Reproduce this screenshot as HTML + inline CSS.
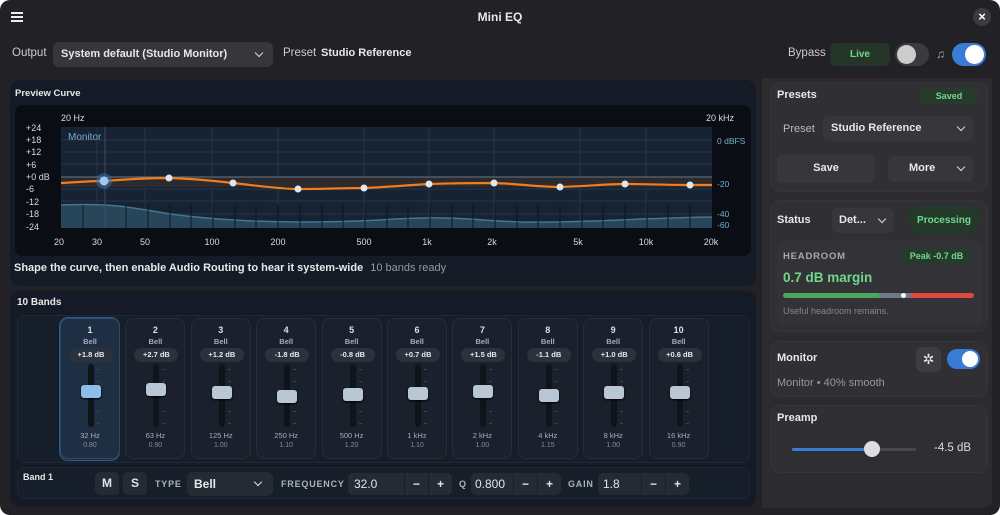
<!DOCTYPE html>
<html><head><meta charset="utf-8"><style>
*{box-sizing:border-box;margin:0;padding:0}
body{width:1000px;height:515px;background:#fff;font-family:"Liberation Sans",sans-serif;overflow:hidden;position:relative}
.win{position:absolute;left:0;top:0;width:1000px;height:515px;background:#222226;border-radius:10px;overflow:hidden}
.a{position:absolute}
.t{color:#e8e8ea;font-size:11px}
.b{font-weight:bold}
.dd{background:#36363b;border-radius:6px}
.chev{position:absolute;width:6px;height:6px;border-right:1.8px solid #ddd;border-bottom:1.8px solid #ddd;transform:rotate(45deg)}
.card{background:#2f2f34;border-radius:10px;border:1px solid #343439}
.strip{position:absolute;top:318px;width:60px;height:141px;background:#1a212c;border:1px solid #252d38;border-radius:8px;text-align:center;color:#c8ccd2}
.strip .n{position:absolute;top:6px;width:100%;font-size:9px;font-weight:bold;color:#dde}
.strip .bl{position:absolute;top:18px;width:100%;font-size:7.5px;font-weight:bold;color:#aab}
.strip .pill{position:absolute;top:29px;left:8px;width:44px;height:14px;border-radius:7px;background:#2a323d;font-size:7.5px;font-weight:bold;line-height:14px;color:#e6e8ec}
.strip .tr{position:absolute;top:45px;left:27px;width:6px;height:63px;border-radius:3px;background:#0f141b}
.strip .tick{position:absolute;left:36px;width:3px;height:1px;background:#3a4350}
.strip .mid{position:absolute;left:20px;width:20px;height:1px;background:#4a5360}
.strip .h{position:absolute;left:20px;width:20px;height:13px;border-radius:3px;background:#b9c6d4;box-shadow:0 1px 2px #000}
.strip .hz{position:absolute;top:112px;width:100%;font-size:7.5px;color:#aab}
.strip .q{position:absolute;top:123px;width:100%;font-size:7px;color:#889}
.btn{position:absolute;background:#252b35;border-radius:5px;color:#dfe3e8;font-weight:bold;text-align:center}
.lbl{position:absolute;font-size:9px;font-weight:bold;color:#aab2bc;letter-spacing:.8px}
.spin{position:absolute;height:22px;background:#252b35;border-radius:5px;color:#e0e4ea;font-size:12px;line-height:22px}
.spin span{position:absolute;top:0;height:22px;width:24px;border-left:1px solid #1a1f27;text-align:center;font-weight:bold}
</style></head><body><div class="win">
<!-- header -->
<div class="a" style="left:11px;top:12px;width:12px;height:2px;background:#eee;box-shadow:0 4px 0 #eee,0 8px 0 #eee"></div>
<div class="a t b" style="left:0;width:1000px;top:10px;text-align:center;font-size:12px">Mini EQ</div>
<div class="a" style="left:973px;top:8px;width:18px;height:18px;border-radius:9px;background:#3a3a3f;color:#fff;font-size:13px;text-align:center;line-height:18px;font-weight:bold">×</div>
<div class="a t" style="left:12px;top:47px;font-size:11.5px;color:#ccc">Output</div>
<div class="a dd" style="left:53px;top:42px;width:220px;height:25px"><div class="a t b" style="left:8px;top:6px;font-size:11px">System default (Studio Monitor)</div><div class="chev" style="left:203px;top:8px"></div></div>
<div class="a t" style="left:283px;top:47px;font-size:11.5px;color:#ccc">Preset</div>
<div class="a t b" style="left:321px;top:47px;font-size:11px">Studio Reference</div>
<div class="a t" style="left:788px;top:47px;font-size:11.5px;color:#ccc">Bypass</div>
<div class="a" style="left:830px;top:43px;width:60px;height:23px;border-radius:6px;background:#253528;color:#6fd98a;font-size:10px;font-weight:bold;text-align:center;line-height:23px">Live</div>
<div class="a" style="left:895px;top:43px;width:34px;height:23px;border-radius:12px;background:#3a3a3f"><div class="a" style="left:2px;top:2px;width:19px;height:19px;border-radius:10px;background:#ccc"></div></div>
<div class="a" style="left:936px;top:47px;font-size:12px;color:#aaa">♫</div>
<div class="a" style="left:952px;top:43px;width:34px;height:23px;border-radius:12px;background:#3a7bd5"><div class="a" style="left:13px;top:2px;width:19px;height:19px;border-radius:10px;background:#fff"></div></div>

<!-- preview panel -->
<div class="a" style="left:10px;top:80px;width:746px;height:206px;background:#141b26;border-radius:10px"></div>
<div class="a t b" style="left:15px;top:88px;font-size:9.5px">Preview Curve</div>
<div class="a" style="left:15px;top:105px;width:736px;height:151px;background:#0a0e14;border-radius:8px"></div>
<svg class="a" style="left:0;top:0" width="760" height="290">
<rect x="61" y="127" width="651" height="101" fill="#172232"/>
<g stroke="#24354a" stroke-width="1">
<line x1="61" x2="712" y1="140" y2="140"/><line x1="61" x2="712" y1="152" y2="152"/><line x1="61" x2="712" y1="164" y2="164"/><line x1="61" x2="712" y1="189" y2="189"/><line x1="61" x2="712" y1="201" y2="201"/><line x1="61" x2="712" y1="214" y2="214"/>
<line x1="97" x2="97" y1="127" y2="228"/><line x1="145" x2="145" y1="127" y2="228"/><line x1="212" x2="212" y1="127" y2="228"/><line x1="278" x2="278" y1="127" y2="228"/><line x1="364" x2="364" y1="127" y2="228"/><line x1="429" x2="429" y1="127" y2="228"/><line x1="494" x2="494" y1="127" y2="228"/><line x1="580" x2="580" y1="127" y2="228"/><line x1="646" x2="646" y1="127" y2="228"/>
</g>
<rect x="61" y="177" width="651" height="10" fill="#2c2a2c"/>
<line x1="61" x2="712" y1="177" y2="177" stroke="#5a6878" stroke-width="1.2"/>
<path d="M61 205 C110 203 130 207 170 214 C230 222 300 224 380 220 C450 215 470 220 520 222 C580 223 640 218 712 217 L712 228 L61 228Z" fill="#28465a"/>
<path d="M61 205 C110 203 130 207 170 214 C230 222 300 224 380 220 C450 215 470 220 520 222 C580 223 640 218 712 217" fill="none" stroke="#3f7890" stroke-width="1.5"/>
<g stroke="#0e1620" stroke-width="1"><line x1="83" x2="83" y1="205" y2="228"/><line x1="105" x2="105" y1="205" y2="228"/><line x1="126" x2="126" y1="205" y2="228"/><line x1="148" x2="148" y1="205" y2="228"/><line x1="170" x2="170" y1="205" y2="228"/><line x1="191" x2="191" y1="205" y2="228"/><line x1="213" x2="213" y1="205" y2="228"/><line x1="235" x2="235" y1="205" y2="228"/><line x1="256" x2="256" y1="205" y2="228"/><line x1="278" x2="278" y1="205" y2="228"/><line x1="300" x2="300" y1="205" y2="228"/><line x1="322" x2="322" y1="205" y2="228"/><line x1="343" x2="343" y1="205" y2="228"/><line x1="365" x2="365" y1="205" y2="228"/><line x1="387" x2="387" y1="205" y2="228"/><line x1="408" x2="408" y1="205" y2="228"/><line x1="430" x2="430" y1="205" y2="228"/><line x1="452" x2="452" y1="205" y2="228"/><line x1="473" x2="473" y1="205" y2="228"/><line x1="495" x2="495" y1="205" y2="228"/><line x1="517" x2="517" y1="205" y2="228"/><line x1="538" x2="538" y1="205" y2="228"/><line x1="560" x2="560" y1="205" y2="228"/><line x1="582" x2="582" y1="205" y2="228"/><line x1="603" x2="603" y1="205" y2="228"/><line x1="625" x2="625" y1="205" y2="228"/><line x1="647" x2="647" y1="205" y2="228"/><line x1="668" x2="668" y1="205" y2="228"/><line x1="690" x2="690" y1="205" y2="228"/></g>
<line x1="105" x2="105" y1="127" y2="228" stroke="#3a5068"/>
<path d="M61 183 C80 182 90 181 104 181 C130 179 150 178 169 178 C200 179 215 181 233 183 C260 186 280 189 298 189 C330 189 345 188 364 188 C390 187 410 185 429 184 C460 183 475 183 494 183 C520 184 540 187 560 187 C590 186 605 184 625 184 C650 184 670 185 690 185 C700 185 705 185 712 185" fill="none" stroke="#f07d1e" stroke-width="2.2"/>
<circle cx="104" cy="181" r="8" fill="#3a6fb0" opacity="0.5"/><circle cx="104" cy="181" r="4.5" fill="#9cc9f5"/>
<g fill="#dfe6ee"><circle cx="169" cy="178" r="3.5"/><circle cx="233" cy="183" r="3.5"/><circle cx="298" cy="189" r="3.5"/><circle cx="364" cy="188" r="3.5"/><circle cx="429" cy="184" r="3.5"/><circle cx="494" cy="183" r="3.5"/><circle cx="560" cy="187" r="3.5"/><circle cx="625" cy="184" r="3.5"/><circle cx="690" cy="185" r="3.5"/></g>
<g font-family="Liberation Sans" font-size="9" fill="#d8dce2">
<text x="61" y="121">20 Hz</text><text x="706" y="121">20 kHz</text>
<text x="26" y="131">+24</text><text x="26" y="143">+18</text><text x="26" y="155">+12</text><text x="26" y="168">+6</text><text x="26" y="180">+0 dB</text><text x="26" y="192">-6</text><text x="26" y="205">-12</text><text x="26" y="217">-18</text><text x="26" y="230">-24</text>
<g text-anchor="middle"><text x="59" y="245">20</text><text x="97" y="245">30</text><text x="145" y="245">50</text><text x="212" y="245">100</text><text x="278" y="245">200</text><text x="364" y="245">500</text><text x="427" y="245">1k</text><text x="492" y="245">2k</text><text x="578" y="245">5k</text><text x="646" y="245">10k</text><text x="711" y="245">20k</text></g>
</g>
<g font-family="Liberation Sans" font-size="8.5" fill="#6fb0cc"><text x="717" y="144">0 dBFS</text><text x="717" y="187">-20</text><text x="717" y="217">-40</text><text x="717" y="228">-60</text></g>
<text x="68" y="140" font-family="Liberation Sans" font-size="10" fill="#6fb0cc">Monitor</text>
</svg>
<div class="a t b" style="left:14px;top:262px;font-size:11px">Shape the curve, then enable Audio Routing to hear it system-wide <span style="font-weight:normal;color:#999;margin-left:4px">10 bands ready</span></div>

<!-- bands panel -->
<div class="a" style="left:10px;top:291px;width:746px;height:216px;background:#141b26;border-radius:10px"></div>
<div class="a t b" style="left:17px;top:297px;font-size:10px">10 Bands</div>
<div class="a" style="left:17px;top:315px;width:733px;height:148px;background:#161e29;border:1px solid #1f2833;border-radius:8px"></div>
<div class="a" style="left:59px;top:317px;width:61px;height:144px;border:1px solid #2c5b8e;border-radius:9px;background:#1a2a3c"></div>
<div id="strips"></div>
<div class="a" style="left:17px;top:467px;width:733px;height:32px;background:#161e29;border:1px solid #1f2833;border-radius:8px"></div>
<div class="a t b" style="left:23px;top:472px;font-size:9px">Band 1</div>
<div class="btn" style="left:95px;top:472px;width:24px;height:23px;line-height:23px;font-size:12px">M</div>
<div class="btn" style="left:123px;top:472px;width:24px;height:23px;line-height:23px;font-size:12px">S</div>
<div class="lbl" style="left:155px;top:479px">TYPE</div>
<div class="a" style="left:187px;top:472px;width:86px;height:24px;background:#252b35;border-radius:6px"><div class="a t b" style="left:7px;top:5px;font-size:12px">Bell</div><div class="chev" style="left:68px;top:7px"></div></div>
<div class="lbl" style="left:281px;top:479px">FREQUENCY</div>
<div class="spin" style="left:348px;top:473px;width:104px"><div class="a" style="left:6px;top:0">32.0</div><span style="left:56px">−</span><span style="left:80px">+</span></div>
<div class="lbl" style="left:459px;top:479px">Q</div>
<div class="spin" style="left:471px;top:473px;width:90px"><div class="a" style="left:4px;top:0">0.800</div><span style="left:42px">−</span><span style="left:66px">+</span></div>
<div class="lbl" style="left:568px;top:479px">GAIN</div>
<div class="spin" style="left:598px;top:473px;width:91px"><div class="a" style="left:5px;top:0">1.8</div><span style="left:43px">−</span><span style="left:67px">+</span></div>

<!-- right panel -->
<div class="a" style="left:762px;top:78px;width:230px;height:430px;background:#2b2b30;border-radius:0 0 8px 0"></div>
<div class="a card" style="left:770px;top:82px;width:218px;height:110px"></div>
<div class="a t b" style="left:777px;top:89px;font-size:11px">Presets</div>
<div class="a" style="left:919px;top:88px;width:60px;height:16px;border-radius:8px;background:#263b2c;color:#6fd98a;font-size:9px;font-weight:bold;text-align:center;line-height:16px">Saved</div>
<div class="a t" style="left:783px;top:123px;color:#bbb">Preset</div>
<div class="a dd" style="left:823px;top:116px;width:151px;height:25px"><div class="a t b" style="left:8px;top:6px">Studio Reference</div><div class="chev" style="left:135px;top:8px"></div></div>
<div class="a dd" style="left:777px;top:154px;width:98px;height:29px"><div class="a t b" style="left:0;width:98px;text-align:center;top:8px">Save</div></div>
<div class="a dd" style="left:888px;top:156px;width:86px;height:26px"><div class="a t b" style="left:21px;top:6px">More</div><div class="chev" style="left:70px;top:8px"></div></div>
<div class="a card" style="left:770px;top:200px;width:218px;height:132px"></div>
<div class="a t b" style="left:777px;top:214px;font-size:11px">Status</div>
<div class="a dd" style="left:832px;top:208px;width:62px;height:25px"><div class="a t b" style="left:7px;top:6px;font-size:11px">Det...</div><div class="chev" style="left:47px;top:8px"></div></div>
<div class="a" style="left:907px;top:206px;width:74px;height:29px;border-radius:15px;background:#25392b;color:#6fd98a;font-size:10px;font-weight:bold;text-align:center;line-height:29px">Processing</div>
<div class="a" style="left:777px;top:241px;width:205px;height:84px;background:#323237;border-radius:8px"></div>
<div class="a" style="left:783px;top:251px;font-size:9.5px;font-weight:bold;color:#aaa;letter-spacing:.8px">HEADROOM</div>
<div class="a" style="left:900px;top:248px;width:73px;height:16px;border-radius:8px;background:#263b2c;color:#6fd98a;font-size:9px;font-weight:bold;text-align:center;line-height:16px">Peak -0.7 dB</div>
<div class="a b" style="left:783px;top:270px;font-size:13.5px;color:#6fd98a">0.7 dB margin</div>
<div class="a" style="left:783px;top:293px;width:96px;height:5px;background:#4ea65e;border-radius:3px 0 0 3px"></div>
<div class="a" style="left:879px;top:293px;width:32px;height:5px;background:#6c7a8c"></div>
<div class="a" style="left:901px;top:293px;width:5px;height:5px;border-radius:3px;background:#fff"></div>
<div class="a" style="left:911px;top:293px;width:63px;height:5px;background:#dc4b3e;border-radius:0 3px 3px 0"></div>
<div class="a" style="left:783px;top:306px;font-size:9px;color:#888">Useful headroom remains.</div>
<div class="a card" style="left:770px;top:341px;width:218px;height:56px"></div>
<div class="a t b" style="left:777px;top:352px;font-size:11px">Monitor</div>
<div class="a" style="left:916px;top:347px;width:25px;height:25px;border-radius:6px;background:#3c3c42;color:#eee;font-size:14px;text-align:center;line-height:25px">✲</div>
<div class="a" style="left:947px;top:349px;width:33px;height:20px;border-radius:10px;background:#3a7bd5"><div class="a" style="left:15px;top:2px;width:16px;height:16px;border-radius:8px;background:#fff"></div></div>
<div class="a" style="left:777px;top:377px;font-size:11px;color:#999">Monitor • 40% smooth</div>
<div class="a card" style="left:770px;top:405px;width:218px;height:68px"></div>
<div class="a t b" style="left:777px;top:412px;font-size:11px">Preamp</div>
<div class="a" style="left:777px;top:431px;width:204px;height:36px;background:#2e2e33;border-radius:6px"></div>
<div class="a" style="left:792px;top:448px;width:124px;height:3px;background:#48484e;border-radius:2px"></div>
<div class="a" style="left:792px;top:448px;width:80px;height:3px;background:#3a7bd5;border-radius:2px"></div>
<div class="a" style="left:864px;top:441px;width:16px;height:16px;border-radius:8px;background:#ddd"></div>
<div class="a" style="left:934px;top:442px;font-size:11.5px;color:#ddd">-4.5 dB</div>
</div>
<script>
var d=[["1","+1.8 dB","32 Hz","0.80",390],["2","+2.7 dB","63 Hz","0.90",388],["3","+1.2 dB","125 Hz","1.00",391],["4","-1.8 dB","250 Hz","1.10",395],["5","-0.8 dB","500 Hz","1.20",393],["6","+0.7 dB","1 kHz","1.10",392],["7","+1.5 dB","2 kHz","1.00",390],["8","-1.1 dB","4 kHz","1.15",394],["9","+1.0 dB","8 kHz","1.00",391],["10","+0.6 dB","16 kHz","0.90",391]];
var h="";d.forEach(function(b,i){var x=60+i*65.4;var hy=b[4]-318-6;
var bg=i==0?"background:#1e2f44;border-color:#2d4a6a;":"";
h+='<div class="strip" style="left:'+x+'px;'+bg+'"><div class="n">'+b[0]+'</div><div class="bl">Bell</div><div class="pill">'+b[1]+'</div><div class="tr"></div>'+
'<div class="tick" style="top:50px"></div><div class="tick" style="top:62px"></div><div class="mid" style="top:73px"></div><div class="tick" style="top:92px"></div><div class="tick" style="top:104px"></div>'+
'<div class="h" style="top:'+hy+'px;'+(i==0?'background:#8ebde9':'')+'"></div><div class="hz">'+b[2]+'</div><div class="q">'+b[3]+'</div></div>';});
document.getElementById("strips").innerHTML=h;
</script>
</body></html>
